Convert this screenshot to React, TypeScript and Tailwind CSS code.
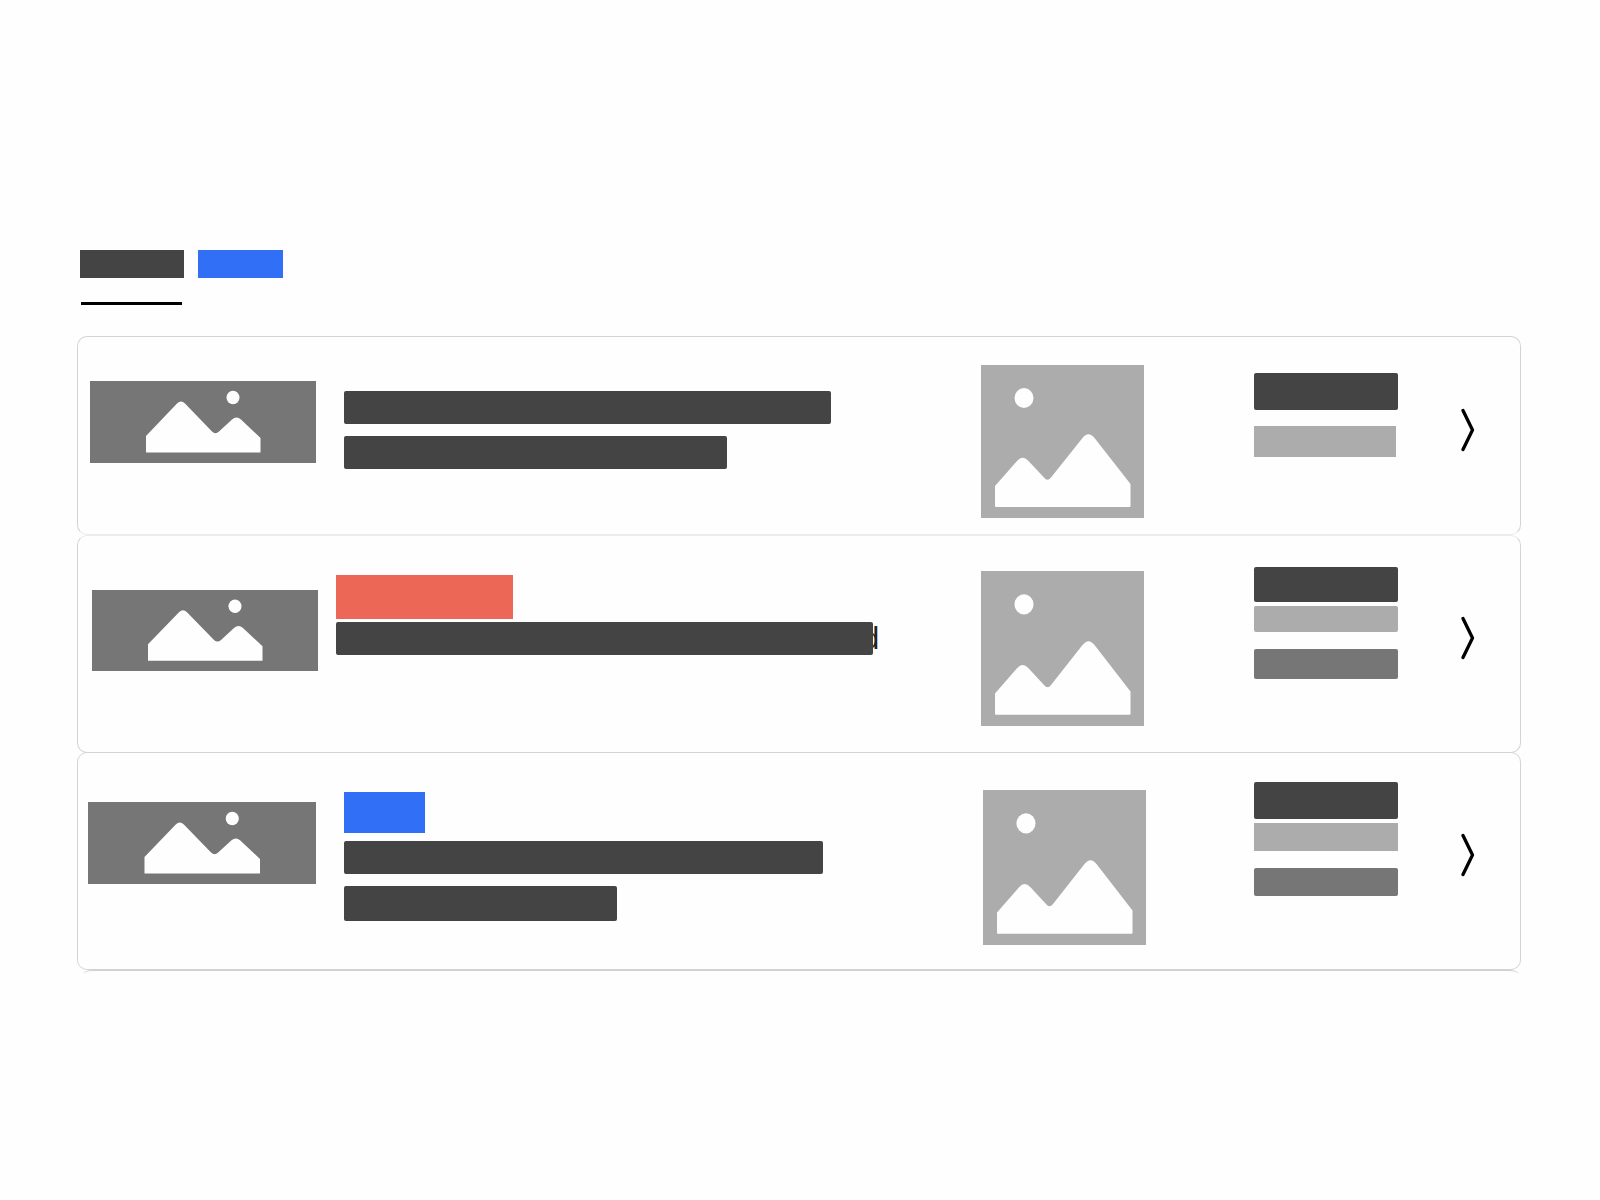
import type { ReactNode } from "react";

const ink = "rounded-[2px] bg-[#444444]";
const soft = "bg-[#acacac]";
const mid = "rounded-[2px] bg-[#767676]";

function WideThumb({ className }: { className: string }) {
  return (
    <svg
      viewBox="0 0 226 82"
      preserveAspectRatio="none"
      className={`block bg-[#767676] ${className}`}
      role="img"
      aria-label="Logo placeholder"
    >
      <g fill="#fefefe">
        <ellipse cx="143" cy="16.5" rx="6.5" ry="6.8" />
        <path d="M56 55 L87 22.5 Q91 18.500 95 22.500 L122 50.500 Q125.500 54 129 50.500 L142 38.500 Q146.500 34.500 151 38.500 L170.500 57 V71.500 H56 Z" />
      </g>
    </svg>
  );
}

function SquareThumb({ className }: { className: string }) {
  return (
    <svg
      viewBox="0 0 163 153"
      preserveAspectRatio="none"
      className={`block w-[163px] bg-[#acacac] ${className}`}
      role="img"
      aria-label="Photo placeholder"
    >
      <g fill="#fefefe">
        <ellipse cx="43" cy="33" rx="9.500" ry="10" />
        <path d="M14 121 L36 96 Q41.500 89.500 47.500 96 L63 112.500 Q66.500 117 70 112.500 L101.500 73 Q107.500 65.500 113.500 73 L149.500 119 V141 Q149.500 142 148.500 142 H15 Q14 142 14 141 Z" />
      </g>
    </svg>
  );
}

type RowProps = {
  thumb: ReactNode;
  title: ReactNode;
  photo: ReactNode;
  details: ReactNode;
  className: string;
  chevron: string;
};

function Row({ thumb, title, photo, details, className, chevron }: RowProps) {
  return (
    <li className={`flex items-start rounded-[10px] border border-[#d4d4d4] bg-[#fefefe] ${className}`}>
      <div className="w-[258px] shrink-0">{thumb}</div>
      <div className="min-w-0 flex-1">{title}</div>
      <div className="w-[273px] shrink-0">{photo}</div>
      <div className="w-[207px] shrink-0">{details}</div>
      <div className={`w-[59px] shrink-0 ${chevron}`}>
        <button type="button" aria-label="Open details" className="block">
          <svg viewBox="0 0 14 44" className="block h-[44px] w-[14px]" fill="none" stroke="#000" strokeWidth="3.300" strokeLinecap="round" strokeLinejoin="round">
            <path d="M2 2.500 L11.500 22 L2 41.500" />
          </svg>
        </button>
      </div>
    </li>
  );
}

export default function App() {
  return (
    <main className="min-h-screen bg-[#fefefe] pt-[250px] pr-[79px] pl-[77px] font-['Liberation_Sans',sans-serif]">
      <nav className="ml-[3px] flex items-start gap-[14px]" aria-label="Sections">
        <button type="button" aria-label="First section" aria-current="page" className="flex w-[104px] flex-col">
          <span className="h-[28px] w-full bg-[#444444]" />
          <span className="mt-6 ml-px h-[3px] w-[101px] bg-black" />
        </button>
        <button type="button" aria-label="Second section" className="h-[28px] w-[85px] bg-[#306ff6]" />
      </nav>

      <ul className="mt-[31px]">
        <Row
          className="h-[199px] border-b-[#ececec]"
          chevron="pt-[71px]"
          thumb={<WideThumb className="mt-[44px] ml-[12px] h-[82px] w-[226px]" />}
          title={
            <div className="flex flex-col gap-3 pt-[54px] pl-2">
              <div className={`h-[33px] w-[487px] max-w-full ${ink}`} />
              <div className={`h-[33px] w-[383px] max-w-full ${ink}`} />
            </div>
          }
          photo={<SquareThumb className="mt-[28px] h-[153px]" />}
          details={
            <div className="pt-[36px]">
              <div className={`h-[37px] w-[144px] ${ink}`} />
              <div className={`mt-4 h-[31px] w-[142px] ${soft}`} />
            </div>
          }
        />
        <Row
          className="h-[218px] border-t-[#ececec]"
          chevron="pt-[80px]"
          thumb={<WideThumb className="mt-[54px] ml-[14px] h-[81px] w-[226px]" />}
          title={
            <div className="pt-[39px]">
              <div className="h-[44px] w-[177px] bg-[#ec6756]" />
              <div className="mt-[3px] flex h-[33px] items-center">
                <div className={`relative z-10 h-[33px] w-[537px] max-w-full ${ink}`} />
                <span className="-ml-[11px] text-[31px] leading-[33px] text-[#222222]">d</span>
              </div>
            </div>
          }
          photo={<SquareThumb className="mt-[35px] h-[155px]" />}
          details={
            <div className="pt-[31px]">
              <div className={`h-[35px] w-[144px] ${ink}`} />
              <div className={`mt-1 h-[26px] w-[144px] rounded-[2px] ${soft}`} />
              <div className={`mt-[17px] h-[30px] w-[144px] ${mid}`} />
            </div>
          }
        />
        <Row
          className="-mt-px h-[218px]"
          chevron="pt-[80px]"
          thumb={<WideThumb className="mt-[49px] ml-[10px] h-[82px] w-[228px]" />}
          title={
            <div className="pt-[39px] pl-2">
              <div className="h-[41px] w-[81px] bg-[#306ff6]" />
              <div className={`mt-2 h-[33px] w-[479px] max-w-full ${ink}`} />
              <div className={`mt-3 h-[35px] w-[273px] max-w-full ${ink}`} />
            </div>
          }
          photo={<SquareThumb className="mt-[37px] ml-[2px] h-[155px]" />}
          details={
            <div className="pt-[29px]">
              <div className={`h-[37px] w-[144px] ${ink}`} />
              <div className={`mt-1 h-[28px] w-[144px] ${soft}`} />
              <div className={`mt-[17px] h-[28px] w-[144px] ${mid}`} />
            </div>
          }
        />
      </ul>
      <div className="mr-[2px] ml-[6px] h-1 border-t border-[#d0d0d0] [border-radius:10px_10px_0_0/4px_4px_0_0]" />
    </main>
  );
}
